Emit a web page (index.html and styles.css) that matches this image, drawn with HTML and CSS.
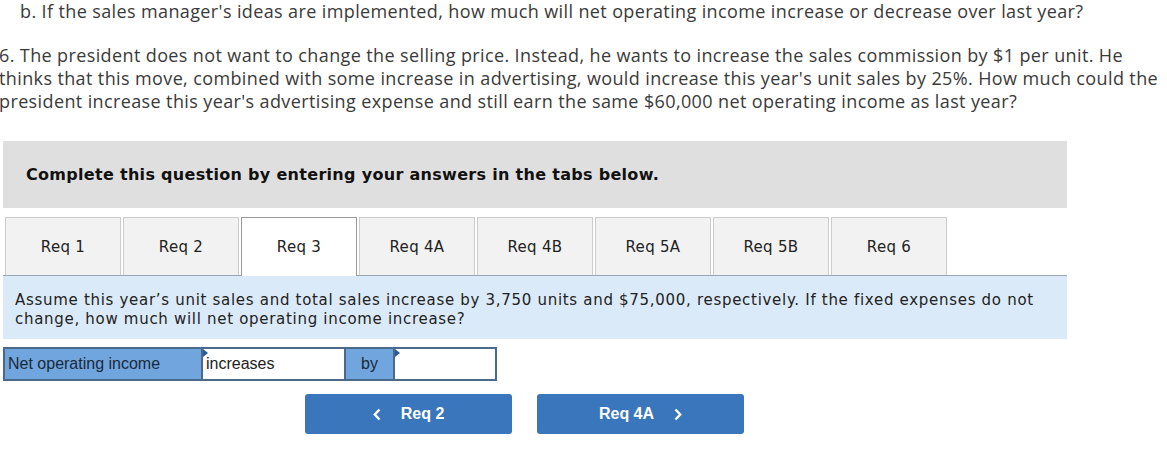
FILE: index.html
```html
<!DOCTYPE html>
<html>
<head>
<meta charset="utf-8">
<link rel="stylesheet" href="styles.css">
</head>
<body>
<p class="q q-b">b. If the sales manager's ideas are implemented, how much will net operating income increase or decrease over last year?</p>
<p class="q q-6">6. The president does not want to change the selling price. Instead, he wants to increase the sales commission by $1 per unit. He thinks that this move, combined with some increase in advertising, would increase this year's unit sales by 25%. How much could the president increase this year's advertising expense and still earn the same $60,000 net operating income as last year?</p>

<div class="widget">
  <div class="instr">Complete this question by entering your answers in the tabs below.</div>
  <div class="tabs">
    <div class="tab">Req 1</div>
    <div class="tab">Req 2</div>
    <div class="tab active">Req 3</div>
    <div class="tab">Req 4A</div>
    <div class="tab">Req 4B</div>
    <div class="tab">Req 5A</div>
    <div class="tab">Req 5B</div>
    <div class="tab">Req 6</div>
  </div>
  <div class="panel">Assume this year’s unit sales and total sales increase by 3,750 units and $75,000, respectively. If the fixed expenses do not change, how much will net operating income increase?</div>
  <div class="answer">
    <div class="cell label">Net operating income</div>
    <div class="cell input inc"><span class="flag"></span>increases</div>
    <div class="cell label by">by</div>
    <div class="cell input amt"><span class="flag"></span></div>
  </div>
  <div class="nav">
    <div class="btn"><svg class="chev" width="8" height="13" viewBox="0 0 8 13"><polyline points="6.5,1.5 1.8,6.5 6.5,11.5" fill="none" stroke="#ffffff" stroke-width="2.4"/></svg><span>Req 2</span></div>
    <div class="btn"><span>Req 4A</span><svg class="chev" width="8" height="13" viewBox="0 0 8 13"><polyline points="1.5,1.5 6.2,6.5 1.5,11.5" fill="none" stroke="#ffffff" stroke-width="2.4"/></svg></div>
  </div>
</div>
</body>
</html>
```

FILE: styles.css
```css
html, body {
  margin: 0;
  padding: 0;
  background: #ffffff;
}

body {
  width: 1167px;
  height: 456px;
  overflow: hidden;
}

.q {
  font-family: "Open Sans", "Lato", sans-serif;
  font-size: 18px;
  letter-spacing: 0.38px;
  color: #3a3a3a;
  margin: 0;
  line-height: 23px;
}

.q-b {
  padding-left: 20px;
}

.q-6 {
  margin-top: 21px;
  margin-left: -1px;
  width: 1160px;
}

.widget {
  margin-top: 28px;
  margin-left: 3px;
  width: 1064px;
}

.instr {
  background: #dfdfdf;
  height: 67px;
  padding-left: 23px;
  display: flex;
  align-items: center;
  font-family: "DejaVu Sans", Verdana, sans-serif;
  font-weight: bold;
  font-size: 16px;
  letter-spacing: 0.3px;
  color: #111111;
}

.tabs {
  display: flex;
  margin-top: 9px;
  padding-left: 2px;
  gap: 2px;
  border-bottom: 1px solid #9aa6b2;
  height: 58px;
}

.tab {
  width: 114px;
  height: 57px;
  background: #f2f2f2;
  border: 1px solid #cccccc;
  border-bottom: none;
  display: flex;
  align-items: center;
  justify-content: center;
  font-family: "DejaVu Sans", Verdana, sans-serif;
  font-size: 15px;
  letter-spacing: 0.3px;
  color: #222222;
}

.tab.active {
  background: #ffffff;
  border-color: #9a9a9a;
  height: 58px;
  margin-bottom: -1px;
  position: relative;
}

.panel {
  background: #dbeaf8;
  padding: 15px 12px 6px 12px;
  height: 42px;
  font-family: "DejaVu Sans", Verdana, sans-serif;
  font-size: 15px;
  letter-spacing: 0.7px;
  line-height: 19px;
  color: #222222;
}

.answer {
  display: flex;
  margin-top: 8px;
  height: 34px;
}

.cell {
  box-sizing: border-box;
  height: 34px;
  display: flex;
  align-items: center;
  font-family: "Liberation Sans", Arial, sans-serif;
  font-size: 16px;
  border: 2px solid #4a6a8c;
  position: relative;
}

.label {
  background: #70a5dd;
  color: #1a2a3c;
  width: 198px;
  padding-left: 3px;
  border-right: none;
}

.label.by {
  width: 47px;
  justify-content: center;
  padding-left: 0;
  border-left: none;
}

.input {
  background: #ffffff;
  color: #222222;
  padding-left: 3px;
}

.inc {
  width: 145px;
}

.amt {
  width: 104px;
}

.flag {
  position: absolute;
  left: 0;
  top: 0;
  width: 0;
  height: 0;
  border-top: 4px solid transparent;
  border-bottom: 4px solid transparent;
  border-left: 5px solid #2a5b96;
}

.nav {
  display: flex;
  margin-top: 13px;
  margin-left: 302px;
  gap: 25px;
}

.btn {
  width: 207px;
  height: 40px;
  background: #3a76bc;
  border-radius: 3px;
  color: #ffffff;
  font-family: "Liberation Sans", Arial, sans-serif;
  font-weight: bold;
  font-size: 16px;
  display: flex;
  align-items: center;
  justify-content: center;
  gap: 20px;
}

.chev {
  display: block;
}
```
